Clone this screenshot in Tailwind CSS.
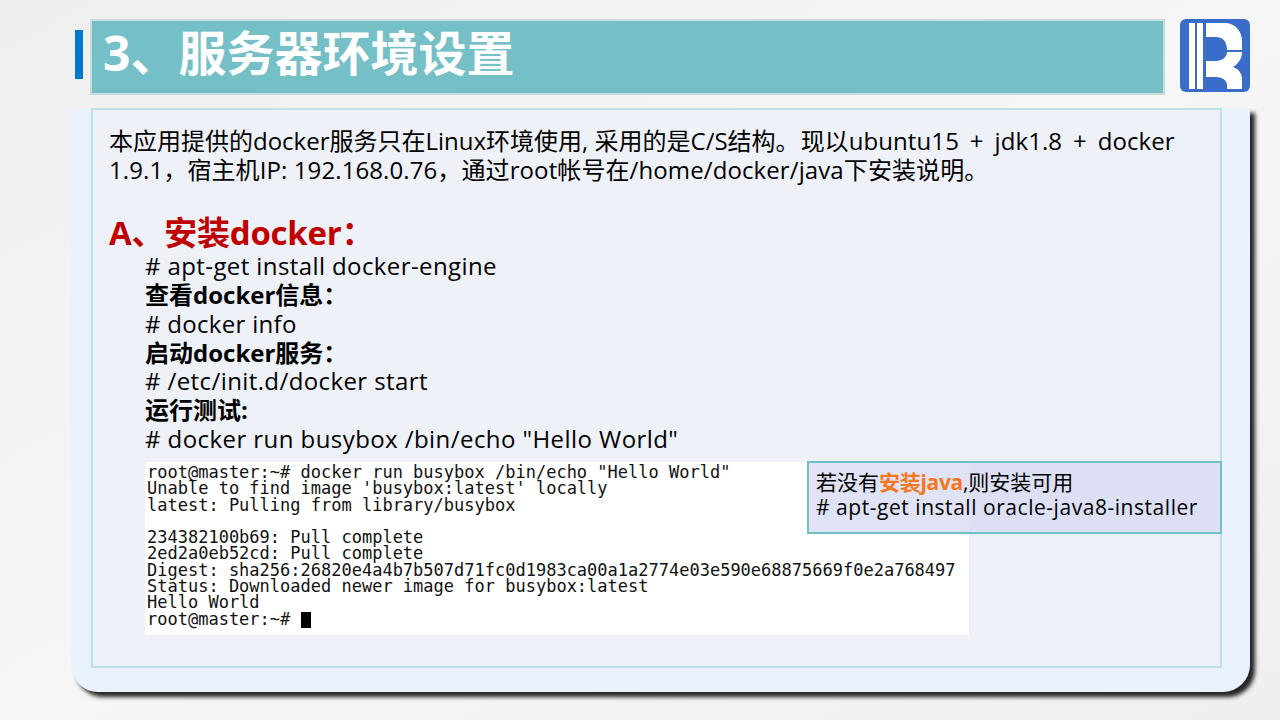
<!DOCTYPE html>
<html lang="zh">
<head>
<meta charset="utf-8">
<script src="https://cdn.jsdelivr.net/npm/@tailwindcss/browser@4"></script>
</head>
<body class="w-[1280px] h-[720px] overflow-hidden bg-gradient-to-br from-[#efefef] via-[#f6f6f6] to-[#efefef] font-['Open_Sans','Noto_Sans_CJK_SC',sans-serif] text-black">
<div class="flex items-start pt-[19px] pl-[75px] h-[108px]">
  <div class="w-[8px] h-[49px] mt-[11px] bg-[#0078d0] mr-[7px]"></div>
  <div class="w-[1075px] h-[76px] bg-[#75bfc6] border-2 border-[#c9dcdc] pl-[11px] text-white font-bold text-[48px] leading-[64px]">3、服务器环境设置</div>
  <svg class="w-[70px] h-[73px] ml-[15px]" viewBox="0 0 70 73">
    <rect width="70" height="73" rx="6" fill="#3a6cca"/>
    <rect x="9" y="4" width="6" height="66" fill="#fff"/>
    <rect x="17" y="4" width="6" height="66" fill="#fff"/>
    <path d="M26 4H45C55 4 62 12 62 22V31H47C47 23 43 18 36 18H26ZM47 33H62C62 40 58 45 53 48C59 50 62 55 62 60V70H47V66C47 62 43 58 36 58H26V42H36C42 42 47 38 47 33Z" fill="#fff"/>
  </svg>
</div>
<div class="relative w-[1179px] h-[584px] ml-[71px] bg-[#e9f1fd] rounded-b-[27px] shadow-[5px_5px_4px_rgba(0,0,0,0.85)]">
  <div class="relative ml-[20px] w-[1131px] h-[560px] bg-[#eef1f7] border-2 border-[#bde0e6] pl-[16px] pt-[16px]">
    <p class="text-[24px] leading-[29px] w-[1090px]">本应用提供的docker服务只在Linux环境使用, 采用的是C/S结构。<span class="ml-[1px]">现以</span><span class="[word-spacing:4.5px] tracking-[0.1px]">ubuntu15 + jdk1.8 + docker</span> <span class="tracking-[0.1px]">1.9.1，宿主机IP: 192.168.0.76，通过root帐号在/home/docker/java下安装说明。</span></p>
    <h2 class="mt-[26px] text-[33px] leading-[46px] font-bold text-[#c00000] tracking-[-0.25px]">A、安装docker：</h2>
    <div class="-mt-[4px] pl-[36px] text-[24px] leading-[28.85px]">
      <p class="tracking-[0.4px]"># apt-get install docker-engine</p>
      <p class="font-bold">查看docker信息：</p>
      <p class="tracking-[0.3px]"># docker info</p>
      <p class="font-bold">启动docker服务：</p>
      <p class="tracking-[0.4px]"># /etc/init.d/docker start</p>
      <p class="font-bold">运行测试:</p>
      <p class="tracking-[0.43px]"># docker run busybox /bin/echo "Hello World"</p>
    </div>
    <pre class="mt-[8px] ml-[36px] w-[824px] h-[173px] bg-white pl-[2px] pt-[2px] font-['DejaVu_Sans_Mono',monospace] text-[17px] leading-[16.3px] text-[#111]">root@master:~# docker run busybox /bin/echo "Hello World"
Unable to find image 'busybox:latest' locally
latest: Pulling from library/busybox

234382100b69: Pull complete
2ed2a0eb52cd: Pull complete
Digest: sha256:26820e4a4b7b507d71fc0d1983ca00a1a2774e03e590e68875669f0e2a768497
Status: Downloaded newer image for busybox:latest
Hello World
root@master:~# <span class="inline-block w-[10px] h-[16px] bg-black align-[-3px]"></span></pre>
    <div class="absolute left-[714px] top-[351px] w-[415px] h-[73px] bg-[#d8dcf2]/80 border-2 border-[#72c0c6] pl-[7px] pt-[7px] text-[21px] leading-[25px]">
      <p>若没有<span class="font-bold text-[#f47820] tracking-[-0.3px]">安装java</span>,则安装可用</p>
      <p class="tracking-[0.54px]"># apt-get install oracle-java8-installer</p>
    </div>
  </div>
</div>
</body>
</html>
